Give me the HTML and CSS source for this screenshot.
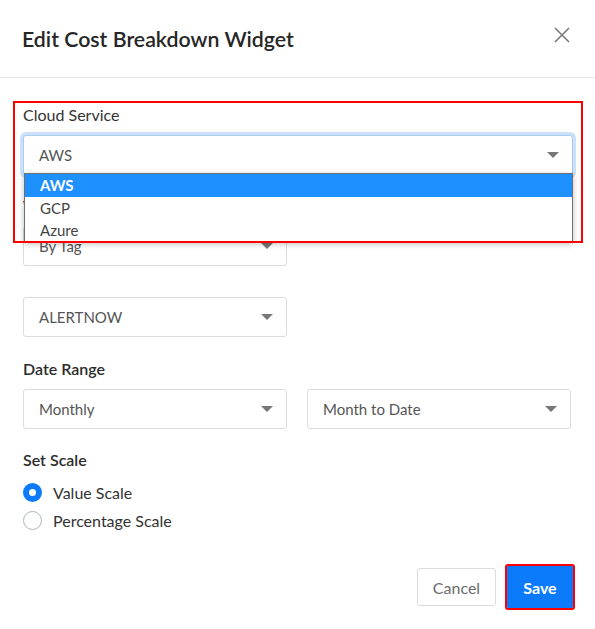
FILE: index.html
```html
<!DOCTYPE html>
<html lang="en">
<head>
<meta charset="utf-8">
<title>Edit Cost Breakdown Widget</title>
<link rel="stylesheet" href="styles.css">
</head>
<body>
<div class="modal">
  <header class="modal-header">
    <h1 class="modal-title">Edit Cost Breakdown Widget</h1>
    <button class="close-btn" aria-label="Close">
      <svg width="16" height="16" viewBox="0 0 16 16"><path d="M1 1L15 15M15 1L1 15" stroke="#7a7a7a" stroke-width="1.6" fill="none"/></svg>
    </button>
  </header>
  <div class="modal-body">
    <div class="field field-cloud">
      <div class="field-label">Cloud Service</div>
      <div class="select select-full select-focused"><span>AWS</span><i class="caret"></i></div>
      <ul class="dropdown">
        <li class="dropdown-item active">AWS</li>
        <li class="dropdown-item">GCP</li>
        <li class="dropdown-item">Azure</li>
      </ul>
      <div class="highlight"></div>
    </div>
    <div class="field field-group">
      <div class="field-label strong">View By</div>
      <div class="select select-half"><span>By Tag</span><i class="caret"></i></div>
    </div>
    <div class="field field-tag">
      <div class="select select-half"><span>ALERTNOW</span><i class="caret"></i></div>
    </div>
    <div class="field field-date">
      <div class="field-label strong">Date Range</div>
      <div class="select-row">
        <div class="select"><span>Monthly</span><i class="caret"></i></div>
        <div class="select"><span>Month to Date</span><i class="caret"></i></div>
      </div>
    </div>
    <div class="field field-scale">
      <div class="field-label strong">Set Scale</div>
      <div class="radio-list">
        <label class="radio"><span class="radio-dot checked"></span><span>Value Scale</span></label>
        <label class="radio"><span class="radio-dot"></span><span>Percentage Scale</span></label>
      </div>
    </div>
    <div class="modal-footer">
      <button class="btn btn-cancel">Cancel</button>
      <button class="btn btn-save">Save</button>
    </div>
  </div>
</div>
</body>
</html>
```

FILE: styles.css
```css
* { box-sizing: border-box; }
html, body { margin: 0; padding: 0; background: #fff; }
body {
  font-family: "Lato", "Liberation Sans", sans-serif;
  color: #333;
  width: 595px;
  height: 629px;
  overflow: hidden;
}
.modal { width: 595px; }
.modal-header {
  height: 78px;
  border-bottom: 1px solid #e6e6e6;
  display: flex;
  align-items: center;
  justify-content: space-between;
  padding: 0 25px 0 22px;
}
.modal-title {
  margin: 0;
  font-size: 21.3px;
  font-weight: 600;
  color: #262626;
}
.close-btn {
  border: 0;
  background: transparent;
  padding: 0;
  width: 16px;
  height: 16px;
  margin-bottom: 8px;
  display: flex;
}
.modal-body {
  padding: 26px 22px 0 23px;
}
.field { position: relative; }
.field-label {
  font-size: 16px;
  line-height: 21px;
  height: 21px;
  margin-bottom: 10px;
  color: #333;
}
.field-label.strong { font-weight: 600; color: #2b2b2b; }
.field-cloud { margin-bottom: 20px; }
.field-group { margin-bottom: 31px; }
.field-tag { margin-bottom: 21px; }
.field-date { margin-bottom: 20px; }
.select {
  height: 40px;
  border: 1px solid #dcdcdc;
  border-radius: 3px;
  background: #fff;
  display: flex;
  align-items: center;
  justify-content: space-between;
  padding: 0 13px 0 15px;
  font-size: 15px;
  color: #555;
}
.select-full { width: 550px; }
.select-half { width: 264px; }
.select-focused {
  border-color: #a8ccf4;
  box-shadow: 0 0 0 3px #cbe0f9;
}
.caret {
  width: 0;
  height: 0;
  border-left: 6px solid transparent;
  border-right: 6px solid transparent;
  border-top: 6px solid #777;
}
.select-row {
  display: grid;
  grid-template-columns: 264px 264px;
  column-gap: 20px;
}
.dropdown {
  position: absolute;
  left: 1px;
  top: 69px;
  width: 549px;
  margin: 0;
  padding: 0;
  list-style: none;
  background: #fff;
  border: 1px solid #6f6f6f;
  box-shadow: 0 2px 6px rgba(0,0,0,.25);
  z-index: 2;
}
.dropdown-item {
  height: 22px;
  line-height: 22px;
  padding-left: 15px;
  font-size: 15px;
  color: #444;
}
.dropdown-item.active {
  background: #1e90ff;
  color: #fff;
  font-weight: 700;
  height: 23px;
  line-height: 23px;
}
.highlight {
  position: absolute;
  left: -10px;
  top: -3px;
  width: 570px;
  height: 142px;
  border: 2px solid #f00;
  z-index: 3;
  pointer-events: none;
}
.radio-list {
  margin-top: -2px;
  display: flex;
  flex-direction: column;
}
.radio {
  height: 28px;
  display: flex;
  align-items: center;
  gap: 11px;
  font-size: 16px;
  color: #333;
}
.radio-dot {
  width: 19px;
  height: 19px;
  border-radius: 50%;
  border: 1px solid #adb5bd;
  background: #fff;
}
.radio-dot.checked {
  border: 6px solid #0b7bfb;
  background: #fff;
}
.modal-footer {
  margin-top: 32px;
  display: flex;
  justify-content: flex-end;
  align-items: center;
  gap: 11px;
}
.btn {
  font-family: inherit;
  font-size: 16px;
  border-radius: 3px;
  cursor: pointer;
}
.btn-cancel {
  width: 79px;
  height: 38px;
  background: #fff;
  border: 1px solid #dcdcdc;
  color: #6c6c6c;
}
.btn-save {
  width: 66px;
  height: 42px;
  background: #0b7bfb;
  border: 0;
  border-radius: 1px;
  color: #fff;
  font-weight: 700;
  outline: 2px solid #f00;
  outline-offset: 0;
}
```
